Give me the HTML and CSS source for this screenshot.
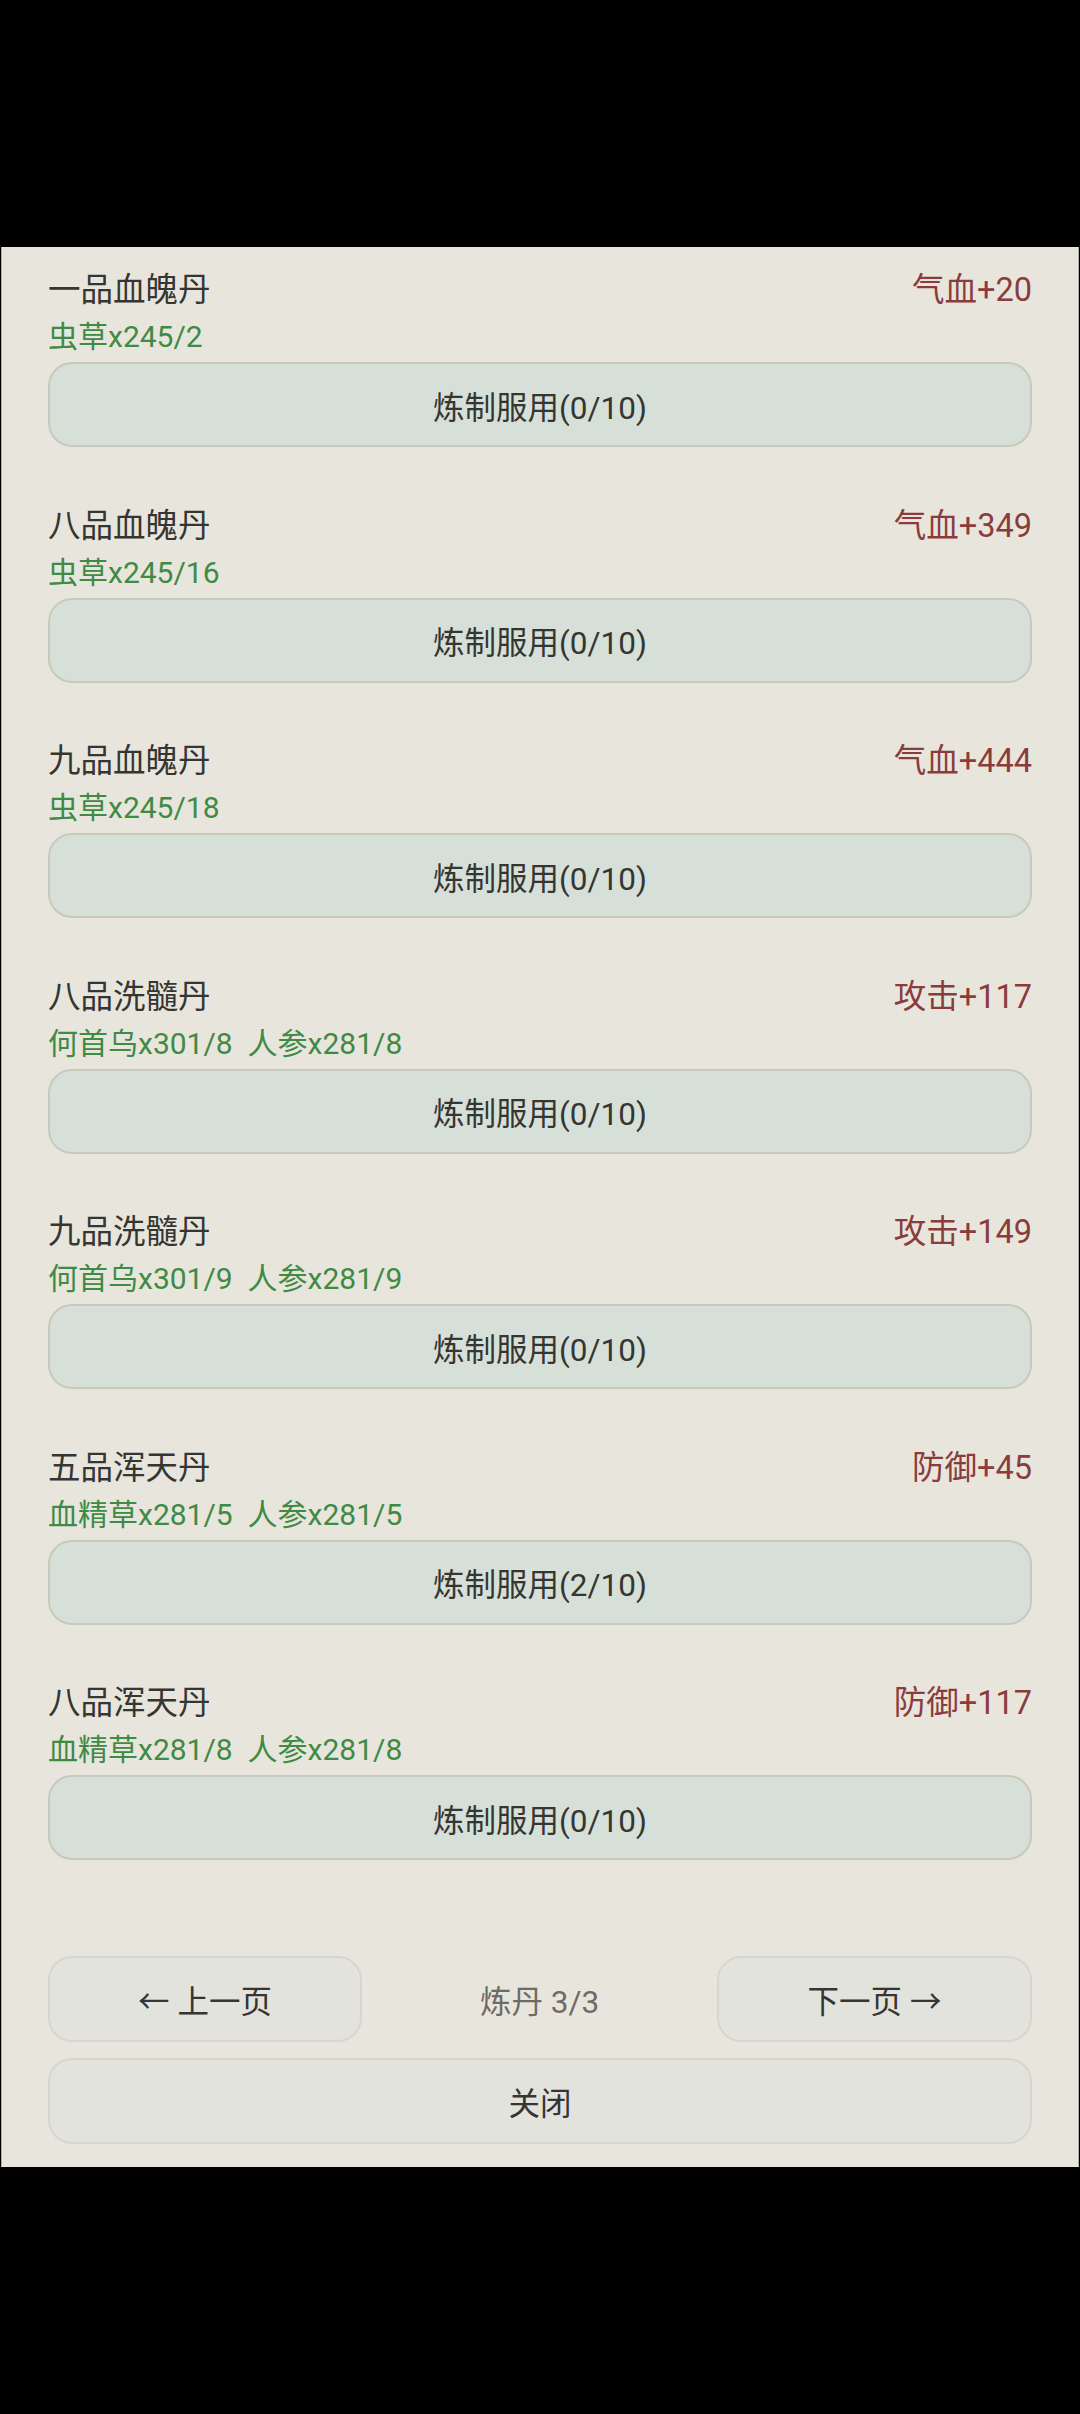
FILE: index.html
```html
<!DOCTYPE html>
<html lang="zh-CN">
<head>
<meta charset="utf-8">
<meta name="viewport" content="width=1080">
<title>炼丹</title>
<link rel="stylesheet" href="styles.css">
</head>
<body>
<div class="screen">
  <div class="panel">
    <div class="list">
      <div class="item">
        <div class="head"><span class="name">一品血魄丹</span><span class="effect">气血+20</span></div>
        <div class="cost">虫草x245/2</div>
        <div class="btn">炼制服用(0/10)</div>
      </div>
      <div class="item">
        <div class="head"><span class="name">八品血魄丹</span><span class="effect">气血+349</span></div>
        <div class="cost">虫草x245/16</div>
        <div class="btn">炼制服用(0/10)</div>
      </div>
      <div class="item">
        <div class="head"><span class="name">九品血魄丹</span><span class="effect">气血+444</span></div>
        <div class="cost">虫草x245/18</div>
        <div class="btn">炼制服用(0/10)</div>
      </div>
      <div class="item">
        <div class="head"><span class="name">八品洗髓丹</span><span class="effect">攻击+117</span></div>
        <div class="cost">何首乌x301/8  人参x281/8</div>
        <div class="btn">炼制服用(0/10)</div>
      </div>
      <div class="item">
        <div class="head"><span class="name">九品洗髓丹</span><span class="effect">攻击+149</span></div>
        <div class="cost">何首乌x301/9  人参x281/9</div>
        <div class="btn">炼制服用(0/10)</div>
      </div>
      <div class="item">
        <div class="head"><span class="name">五品浑天丹</span><span class="effect">防御+45</span></div>
        <div class="cost">血精草x281/5  人参x281/5</div>
        <div class="btn">炼制服用(2/10)</div>
      </div>
      <div class="item">
        <div class="head"><span class="name">八品浑天丹</span><span class="effect">防御+117</span></div>
        <div class="cost">血精草x281/8  人参x281/8</div>
        <div class="btn">炼制服用(0/10)</div>
      </div>
    </div>
    <div class="nav">
      <div class="navbtn">← 上一页</div>
      <div class="page">炼丹 3/3</div>
      <div class="navbtn">下一页 →</div>
    </div>
    <div class="navbtn close">关闭</div>
  </div>
</div>
</body>
</html>
```

FILE: styles.css
```css
* {
  box-sizing: border-box;
}

html, body {
  margin: 0;
  padding: 0;
  background: #000;
}

body {
  width: 1080px;
  height: 2414px;
  font-family: "Roboto", "Noto Sans CJK SC", sans-serif;
  color: #333330;
}

.screen {
  padding-top: 247px;
}

.panel {
  margin: 0 1px;
  background: #e8e6dc;
  border-left: 1px solid #b2b0a8;
  border-right: 1px solid #b2b0a8;
  padding: 21px 46px 23px;
}

.list {
  display: flex;
  flex-direction: column;
  gap: 56.5px;
}

.item {
  display: flex;
  flex-direction: column;
}

.head {
  display: flex;
  justify-content: space-between;
  align-items: center;
  height: 44px;
  font-size: 32.5px;
  line-height: 44px;
}

.name {
  color: #353532;
}

.effect {
  color: #8a3c3c;
}

.cost {
  height: 50px;
  line-height: 50px;
  font-size: 30px;
  color: #3f8a45;
  white-space: pre;
}

.btn {
  height: 85px;
  display: flex;
  align-items: center;
  justify-content: center;
  background: #d6e0d8;
  border: 2px solid #c8c9bd;
  border-radius: 24px;
  font-size: 31.5px;
  color: #353532;
}

.nav {
  margin-top: 96px;
  display: grid;
  grid-template-columns: 314px 1fr 315px;
  align-items: center;
}

.navbtn {
  height: 86px;
  display: flex;
  align-items: center;
  justify-content: center;
  background: #e3e3dd;
  border: 2px solid #d8d6cc;
  border-radius: 24px;
  font-size: 31.5px;
  color: #353532;
}

.page {
  text-align: center;
  font-size: 31.5px;
  color: #6e6b65;
}

.close {
  margin-top: 16px;
}
```
